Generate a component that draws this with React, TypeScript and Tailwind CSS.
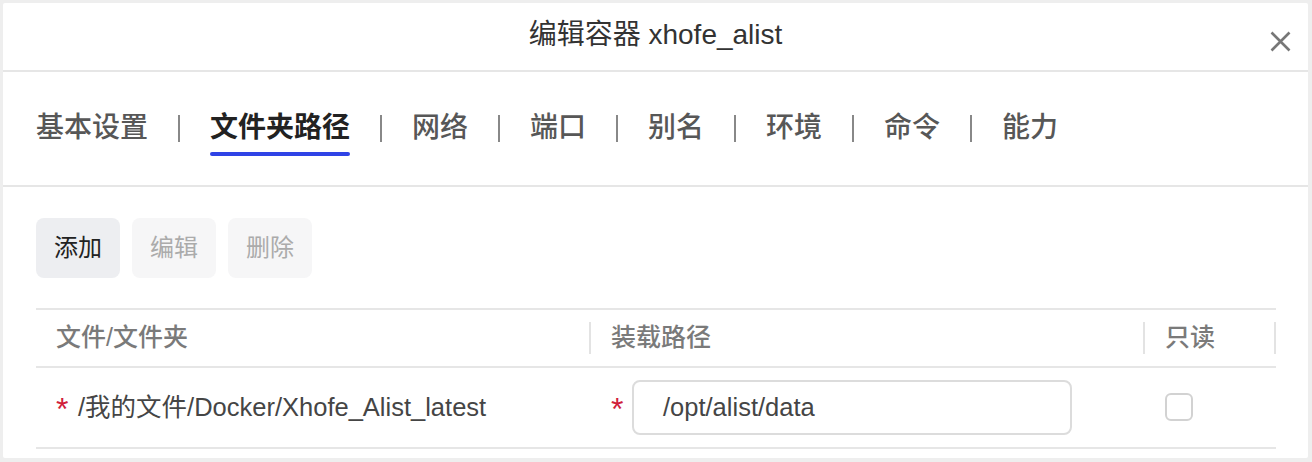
import React from "react";

const font = { fontFamily: '"Liberation Sans", "Noto Sans CJK SC", sans-serif' };

const tabs = ["基本设置", "文件夹路径", "网络", "端口", "别名", "环境", "命令", "能力"];

export default function App() {
  return (
    <div
      className="w-[1312px] h-[462px] bg-[#eeeeee] pt-[3px] pl-[3px] pr-[4px] pb-[4px] overflow-hidden"
      style={font}
    >
      <div className="w-full h-full bg-white flex flex-col rounded-[2px]">
        {/* Header */}
        <div className="relative h-[69px] shrink-0 flex items-center justify-center border-b-2 border-[#e6e6e6] pb-[4px]">
          <span className="text-[28px] leading-[36px] text-[#333333]">编辑容器 xhofe_alist</span>
          <svg
            className="absolute right-[17px] top-[28px]"
            width="21"
            height="21"
            viewBox="0 0 21 21"
            fill="none"
            stroke="#777777"
            strokeWidth="2.6"
            strokeLinecap="butt"
          >
            <path d="M1.5 1.5 L19.5 19.5 M19.5 1.5 L1.5 19.5" />
          </svg>
        </div>

        {/* Tabs */}
        <div className="h-[115px] shrink-0 flex items-center pl-[33px] pb-[1px] border-b-2 border-[#e6e6e6] gap-[30px]">
          {tabs.map((t, i) => (
            <React.Fragment key={t}>
              {i > 0 && <div className="w-[2px] h-[27px] bg-[#888888]" />}
              <span
                className={
                  "relative text-[28px] leading-[40px] " +
                  (i === 1 ? "font-bold text-[#222222]" : "font-medium text-[#575757]")
                }
              >
                {t}
                {i === 1 && (
                  <span className="absolute left-0 right-0 top-[44px] h-[4px] rounded-full bg-[#2f43e6]" />
                )}
              </span>
            </React.Fragment>
          ))}
        </div>

        {/* Content */}
        <div className="pl-[33px] pr-[32px] pt-[31px] flex flex-col">
          <div className="flex gap-[12px]">
            <button className="w-[84px] h-[60px] rounded-[8px] bg-[#edeef1] text-[24px] text-[#222222]">
              添加
            </button>
            <button className="w-[84px] h-[60px] rounded-[8px] bg-[#f6f6f7] text-[24px] text-[#ababab]">
              编辑
            </button>
            <button className="w-[84px] h-[60px] rounded-[8px] bg-[#f6f6f7] text-[24px] text-[#ababab]">
              删除
            </button>
          </div>

          {/* Table */}
          <div className="mt-[30px] w-[1240px] border-t-2 border-[#e6e6e6]">
            <div className="h-[58px] flex items-center border-b-2 border-[#e6e6e6] text-[25px] font-medium text-[#7a7a7a]">
              <div className="w-[553px] pl-[20px]">文件/文件夹</div>
              <div className="w-[2px] h-[32px] bg-[#e3e3e3]" />
              <div className="w-[552px] pl-[20px]">装载路径</div>
              <div className="w-[2px] h-[32px] bg-[#e3e3e3]" />
              <div className="w-[129px] pl-[20px]">只读</div>
              <div className="w-[2px] h-[32px] bg-[#e3e3e3]" />
            </div>
            <div className="h-[81px] flex items-center border-b-2 border-[#e6e6e6] text-[25.5px] text-[#454545]">
              <div className="w-[555px] pl-[20px] flex items-center">
                <span className="text-[#d0203a] text-[32px] w-[22px] translate-y-[1px] leading-none">*</span>
                <span>/我的文件/Docker/Xhofe_Alist_latest</span>
              </div>
              <div className="w-[554px] pl-[20px] flex items-center">
                <span className="text-[#d0203a] text-[32px] w-[21px] translate-y-[1px] leading-none">*</span>
                <div className="w-[440px] h-[55px] rounded-[8px] border-2 border-[#dcdcdc] flex items-center pl-[29px]">
                  /opt/alist/data
                </div>
              </div>
              <div className="w-[131px] pl-[20px] flex items-center">
                <div className="w-[28px] h-[28px] rounded-[6px] border-2 border-[#d2d2d2] -translate-y-[1px]" />
              </div>
            </div>
          </div>
        </div>
      </div>
    </div>
  );
}
